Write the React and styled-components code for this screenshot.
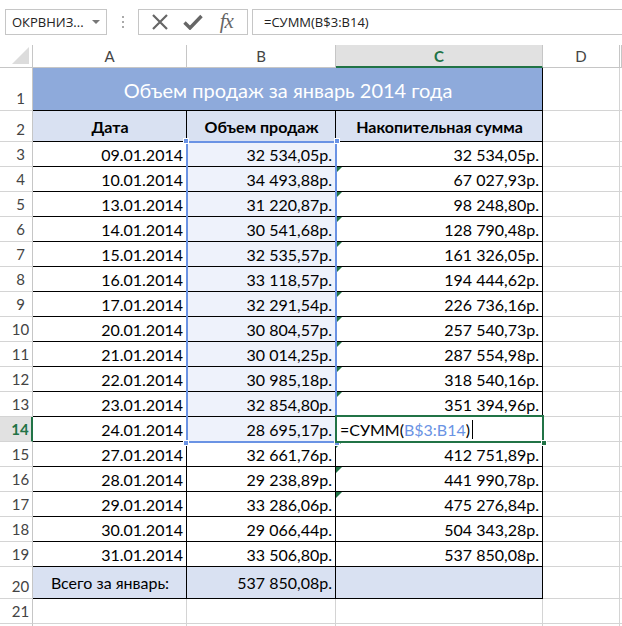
import React from "react";
import styled, { createGlobalStyle, css } from "styled-components";

const Global = createGlobalStyle`
  html, body { margin: 0; padding: 0; background: #fff; }
  body { width: 622px; height: 626px; overflow: hidden; }
  * { box-sizing: border-box; }
`;

const GRID = "#d4d4d4";
const HEAD_LINE = "#c6c6c6";
const GREEN = "#217346";
const SEL_BLUE = "#6a93e4";
const SEL_FILL = "#eef2fb";
const TITLE_BG = "#8eaadb";
const HEAD_BG = "#d9e1f2";
const COLS = "33px 154px 149px 207px 77px 1fr";

const Page = styled.div`
  width: 622px;
  height: 626px;
  overflow: hidden;
  font-family: Lato, "Open Sans", sans-serif;
`;

const FormulaBar = styled.div`
  display: flex;
  align-items: center;
  height: 45px;
  padding: 0 0 2px 5px;
`;

const NameBox = styled.div`
  width: 102px;
  height: 26px;
  border: 1px solid ${HEAD_LINE};
  display: flex;
  align-items: center;
  justify-content: space-between;
  padding: 0 6px 0 6px;
  font-family: "Open Sans", sans-serif;
  font-size: 13px;
  color: #222;
`;

const DropArrow = styled.span`
  width: 0;
  height: 0;
  border-left: 4px solid transparent;
  border-right: 4px solid transparent;
  border-top: 4px solid #777;
`;

const Grip = styled.div`
  width: 30px;
  display: flex;
  flex-direction: column;
  align-items: center;
  gap: 3px;
  margin-left: 1px;
`;

const GripDot = styled.span`
  width: 2px;
  height: 2px;
  background: #aaa;
`;

const IconBox = styled.div`
  width: 110px;
  height: 26px;
  border: 1px solid ${HEAD_LINE};
  display: flex;
  align-items: center;
  justify-content: space-around;
  padding: 0 4px;
  color: #666;
`;

const IconBtn = styled.span`
  display: flex;
  align-items: center;
  justify-content: center;
  width: 28px;
  height: 24px;
`;

const Fx = styled.span`
  font-family: "Liberation Serif", "DejaVu Serif", serif;
  font-style: italic;
  font-size: 21px;
  color: #666;
  letter-spacing: -1px;
`;

const FormulaInput = styled.div`
  flex: 1;
  margin-left: 4px;
  height: 26px;
  border: 1px solid ${HEAD_LINE};
  border-right: none;
  display: flex;
  align-items: center;
  padding-left: 11px;
  font-family: "Open Sans", sans-serif;
  font-size: 13px;
  color: #222;
`;

const Sheet = styled.div`
  position: relative;
`;

const Row = styled.div`
  display: grid;
  grid-template-columns: ${COLS};
  height: ${(p) => p.$h}px;
`;

const Corner = styled.div`
  position: relative;
  border-right: 1px solid ${HEAD_LINE};
  border-bottom: 1px solid ${HEAD_LINE};
  &::after {
    content: "";
    position: absolute;
    right: 3px;
    bottom: 3px;
    border-left: 17px solid transparent;
    border-bottom: 17px solid #dcdcdc;
  }
`;

const ColHead = styled.div`
  display: flex;
  align-items: center;
  justify-content: center;
  font-size: 15px;
  color: #444;
  border-right: 1px solid ${HEAD_LINE};
  border-bottom: 1px solid ${HEAD_LINE};
  ${(p) =>
    p.$active &&
    css`
      background: #e1e1e1;
      color: ${GREEN};
      font-weight: 700;
      border-bottom: 2px solid ${GREEN};
    `}
`;

const RowHead = styled.div`
  display: flex;
  align-items: flex-end;
  justify-content: center;
  padding: 0 0 3px 9px;
  font-size: 15px;
  color: #444;
  border-right: 1px solid ${HEAD_LINE};
  border-bottom: 1px solid ${GRID};
  ${(p) =>
    p.$active &&
    css`
      background: #e1e1e1;
      color: ${GREEN};
      font-weight: 700;
      border-right: 2px solid ${GREEN};
    `}
`;

const Cell = styled.div`
  position: relative;
  display: flex;
  align-items: center;
  justify-content: ${(p) =>
    p.$align === "center" ? "center" : p.$align === "left" ? "flex-start" : "flex-end"};
  padding: 0 3px 0 4px;
  font-size: 16px;
  color: #000;
  white-space: nowrap;
  background: ${(p) => p.$bg || "transparent"};
  font-weight: ${(p) => (p.$bold ? 700 : 400)};
  border-right: 1px solid ${(p) => (p.$table ? "#000" : GRID)};
  border-bottom: 1px solid ${(p) => (p.$table ? "#000" : GRID)};
  ${(p) =>
    p.$flag &&
    css`
      &::before {
        content: "";
        position: absolute;
        left: 0;
        top: 0;
        border-top: 6px solid ${GREEN};
        border-right: 6px solid transparent;
      }
    `}
`;

const TitleCell = styled(Cell)`
  grid-column: 2 / 5;
  justify-content: center;
  color: #fff;
  font-size: 20px;
  padding-top: 2px;
`;

const RangeBox = styled.div`
  position: absolute;
  left: 186px;
  top: 96px;
  width: 151px;
  height: 302px;
  border: 2px solid ${SEL_BLUE};
  pointer-events: none;
`;

const Handle = styled.span`
  position: absolute;
  width: 6px;
  height: 6px;
  background: ${(p) => p.$color};
  border: 1px solid #fff;
  ${(p) => p.$pos}
`;

const ActiveBox = styled.div`
  position: absolute;
  left: 335px;
  top: 370px;
  width: 209px;
  height: 28px;
  border: 2px solid ${GREEN};
  pointer-events: none;
`;

const Ref = styled.span`
  color: ${SEL_BLUE};
`;

const Caret = styled.span`
  display: inline-block;
  width: 1px;
  height: 19px;
  background: #000;
  margin-left: 2px;
`;

const data = [
  ["09.01.2014", "32 534,05р.", "32 534,05р."],
  ["10.01.2014", "34 493,88р.", "67 027,93р."],
  ["13.01.2014", "31 220,87р.", "98 248,80р."],
  ["14.01.2014", "30 541,68р.", "128 790,48р."],
  ["15.01.2014", "32 535,57р.", "161 326,05р."],
  ["16.01.2014", "33 118,57р.", "194 444,62р."],
  ["17.01.2014", "32 291,54р.", "226 736,16р."],
  ["20.01.2014", "30 804,57р.", "257 540,73р."],
  ["21.01.2014", "30 014,25р.", "287 554,98р."],
  ["22.01.2014", "30 985,18р.", "318 540,16р."],
  ["23.01.2014", "32 854,80р.", "351 394,96р."],
  ["24.01.2014", "28 695,17р.", null],
  ["27.01.2014", "32 661,76р.", "412 751,89р."],
  ["28.01.2014", "29 238,89р.", "441 990,78р."],
  ["29.01.2014", "33 286,06р.", "475 276,84р."],
  ["30.01.2014", "29 066,44р.", "504 343,28р."],
  ["31.01.2014", "33 506,80р.", "537 850,08р."],
];

const flagged = new Set([4, 5, 6, 7, 8, 9, 10, 11, 12, 13, 15, 16, 17]);

export default function App() {
  return (
    <Page>
      <Global />
      <FormulaBar>
        <NameBox>
          <span>ОКРВНИЗ...</span>
          <DropArrow />
        </NameBox>
        <Grip>
          <GripDot />
          <GripDot />
          <GripDot />
        </Grip>
        <IconBox>
          <IconBtn>
            <svg width="18" height="16" viewBox="0 0 18 16">
              <path d="M2 1 L16 15 M16 1 L2 15" stroke="#666" strokeWidth="2.2" fill="none" />
            </svg>
          </IconBtn>
          <IconBtn>
            <svg width="20" height="16" viewBox="0 0 20 16">
              <path d="M1.5 8.5 L7 14 L18.5 2" stroke="#666" strokeWidth="3.4" fill="none" />
            </svg>
          </IconBtn>
          <IconBtn>
            <Fx>fx</Fx>
          </IconBtn>
        </IconBox>
        <FormulaInput>=СУММ(B$3:B14)</FormulaInput>
      </FormulaBar>
      <Sheet>
        <Row $h={23}>
          <Corner />
          <ColHead>A</ColHead>
          <ColHead>B</ColHead>
          <ColHead $active>C</ColHead>
          <ColHead>D</ColHead>
          <ColHead />
        </Row>
        <Row $h={43}>
          <RowHead>1</RowHead>
          <TitleCell $table $bg={TITLE_BG}>
            Объем продаж за январь 2014 года
          </TitleCell>
          <Cell />
          <Cell />
        </Row>
        <Row $h={31}>
          <RowHead>2</RowHead>
          <Cell $table $bg={HEAD_BG} $bold $align="center">Дата</Cell>
          <Cell $table $bg={HEAD_BG} $bold $align="center">Объем продаж</Cell>
          <Cell $table $bg={HEAD_BG} $bold $align="center">Накопительная сумма</Cell>
          <Cell />
          <Cell />
        </Row>
        {data.map((r, i) => {
          const n = i + 3;
          const active = n === 14;
          return (
            <Row $h={25} key={n}>
              <RowHead $active={active}>{n}</RowHead>
              <Cell $table>{r[0]}</Cell>
              <Cell $table $bg={n <= 14 ? SEL_FILL : undefined}>{r[1]}</Cell>
              <Cell $table $flag={flagged.has(n)} $align={active ? "left" : "right"}>
                {active ? (
                  <>
                    =СУММ(<Ref>B$3:B14</Ref>)<Caret />
                  </>
                ) : (
                  r[2]
                )}
              </Cell>
              <Cell />
              <Cell />
            </Row>
          );
        })}
        <Row $h={32}>
          <RowHead>20</RowHead>
          <Cell $table $bg={HEAD_BG} $align="center">Всего за январь:</Cell>
          <Cell $table $bg={HEAD_BG}>537 850,08р.</Cell>
          <Cell $table $bg={HEAD_BG} />
          <Cell />
          <Cell />
        </Row>
        <Row $h={25}>
          <RowHead>21</RowHead>
          <Cell />
          <Cell />
          <Cell />
          <Cell />
          <Cell />
        </Row>
        <Row $h={25}>
          <RowHead />
          <Cell />
          <Cell />
          <Cell />
          <Cell />
          <Cell />
        </Row>
        <RangeBox>
          <Handle $color={SEL_BLUE} $pos="left:-5px;top:-5px;" />
          <Handle $color={SEL_BLUE} $pos="right:-5px;top:-5px;" />
          <Handle $color={SEL_BLUE} $pos="left:-5px;bottom:-5px;" />
          <Handle $color={SEL_BLUE} $pos="right:-5px;bottom:-5px;" />
        </RangeBox>
        <ActiveBox>
          <Handle $color={GREEN} $pos="right:-5px;bottom:-5px;" />
        </ActiveBox>
      </Sheet>
    </Page>
  );
}
